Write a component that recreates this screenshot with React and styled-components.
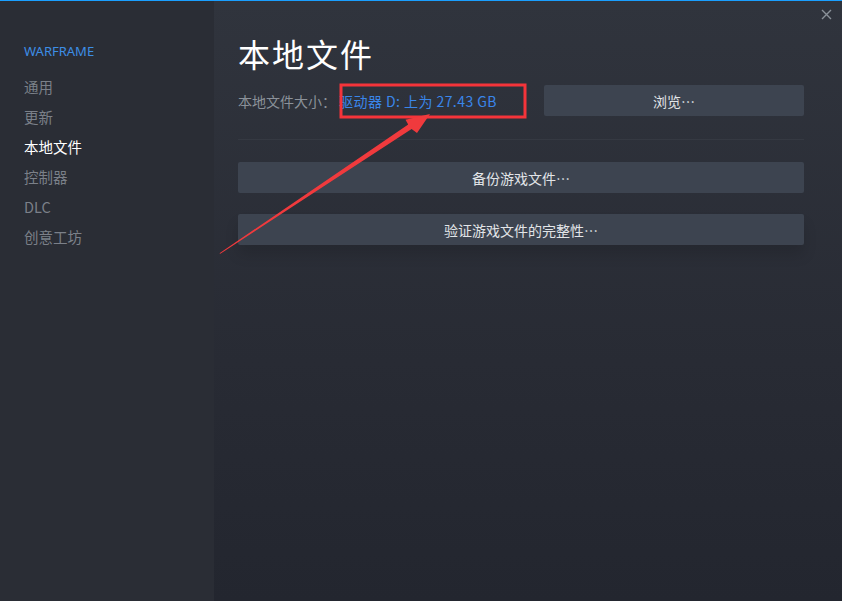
import React from 'react';
import styled, { createGlobalStyle } from 'styled-components';

const GlobalStyle = createGlobalStyle`
  html, body {
    margin: 0;
    padding: 0;
    background: #23262e;
  }
  body {
    font-family: 'Noto Sans', 'Noto Sans CJK SC', sans-serif;
  }
`;

const Window = styled.div`
  position: relative;
  display: flex;
  width: 842px;
  height: 601px;
  box-sizing: border-box;
  border-top: 1px solid #1a9fff;
  overflow: hidden;
`;

const Sidebar = styled.nav`
  width: 214px;
  flex-shrink: 0;
  background: #2a2d35;
  padding: 40px 0 0 24px;
  box-sizing: border-box;
`;

const GameName = styled.div`
  font-size: 13px;
  line-height: 20px;
  color: #3d8ee6;
  margin-bottom: 11px;
`;

const NavItem = styled.div`
  font-family: 'Noto Sans CJK SC', 'Noto Sans', sans-serif;
  font-size: 14.5px;
  line-height: 30px;
  color: ${p => (p.$active ? '#ffffff' : '#7b8089')};
`;

const Main = styled.main`
  flex: 1;
  background: linear-gradient(to bottom, #30343d 0%, #282b34 60%, #23262f 100%);
  padding: 32px 38px 0 24px;
  box-sizing: border-box;
  font-family: 'Noto Sans CJK SC', 'Noto Sans', sans-serif;
`;

const Title = styled.h1`
  margin: 0 0 12px;
  font-size: 32px;
  line-height: 40px;
  font-weight: 400;
  letter-spacing: 2px;
  color: #ffffff;
`;

const SizeRow = styled.div`
  display: flex;
  align-items: center;
  height: 31px;
`;

const SizeInfo = styled.div`
  flex: 1;
  font-size: 14px;
  color: #8b9199;
`;

const DriveLink = styled.span`
  color: #3a86ea;
  margin-left: 3px;
  letter-spacing: 0.45px;
`;

const Divider = styled.hr`
  border: 0;
  height: 1px;
  background: #353942;
  margin: 23px 0 22px;
`;

const Button = styled.button`
  display: block;
  width: ${p => p.$width || '100%'};
  height: 31px;
  border: 0;
  border-radius: 2px;
  background: #3d4450;
  color: #e2e5e8;
  font-family: 'Noto Sans CJK SC', 'Noto Sans', sans-serif;
  font-size: 14px;
  cursor: pointer;
  margin-bottom: ${p => p.$gap || '0'};
  box-shadow: ${p => (p.$shadow ? '0 10px 14px rgba(0, 0, 0, 0.12)' : 'none')};
`;

const CloseButton = styled.div`
  position: absolute;
  top: 6px;
  right: 9px;
  width: 14px;
  height: 14px;
  display: flex;
  align-items: center;
  justify-content: center;
`;

const Annotation = styled.svg`
  position: absolute;
  left: 0;
  top: -1px;
  pointer-events: none;
`;

export default function App() {
  const nav = ['通用', '更新', '本地文件', '控制器', 'DLC', '创意工坊'];
  return (
    <>
      <GlobalStyle />
      <Window>
        <Sidebar>
          <GameName>WARFRAME</GameName>
          {nav.map(item => (
            <NavItem key={item} $active={item === '本地文件'}>
              {item}
            </NavItem>
          ))}
        </Sidebar>
        <Main>
          <Title>本地文件</Title>
          <SizeRow>
            <SizeInfo>
              本地文件大小：<DriveLink>驱动器 D: 上为 27.43 GB</DriveLink>
            </SizeInfo>
            <Button $width="260px">浏览…</Button>
          </SizeRow>
          <Divider />
          <Button $gap="21px">备份游戏文件…</Button>
          <Button $shadow>验证游戏文件的完整性…</Button>
        </Main>
        <CloseButton>
          <svg width="11" height="11" viewBox="0 0 11 11">
            <path d="M1 1 L10 10 M10 1 L1 10" stroke="#8a9199" strokeWidth="1.4" />
          </svg>
        </CloseButton>
        {/* 红色标注框和箭头 */}
        <Annotation width="842" height="601" viewBox="0 0 842 601">
          <rect x="341" y="85" width="184" height="32" fill="none" stroke="#f5343a" strokeWidth="3" />
          <polygon
            points="219.5,253.2 220.3,253.8 411.6,129 417,133 430,114 405.5,119.8 408.2,124.4"
            fill="#f03a3d"
          />
        </Annotation>
      </Window>
    </>
  );
}
